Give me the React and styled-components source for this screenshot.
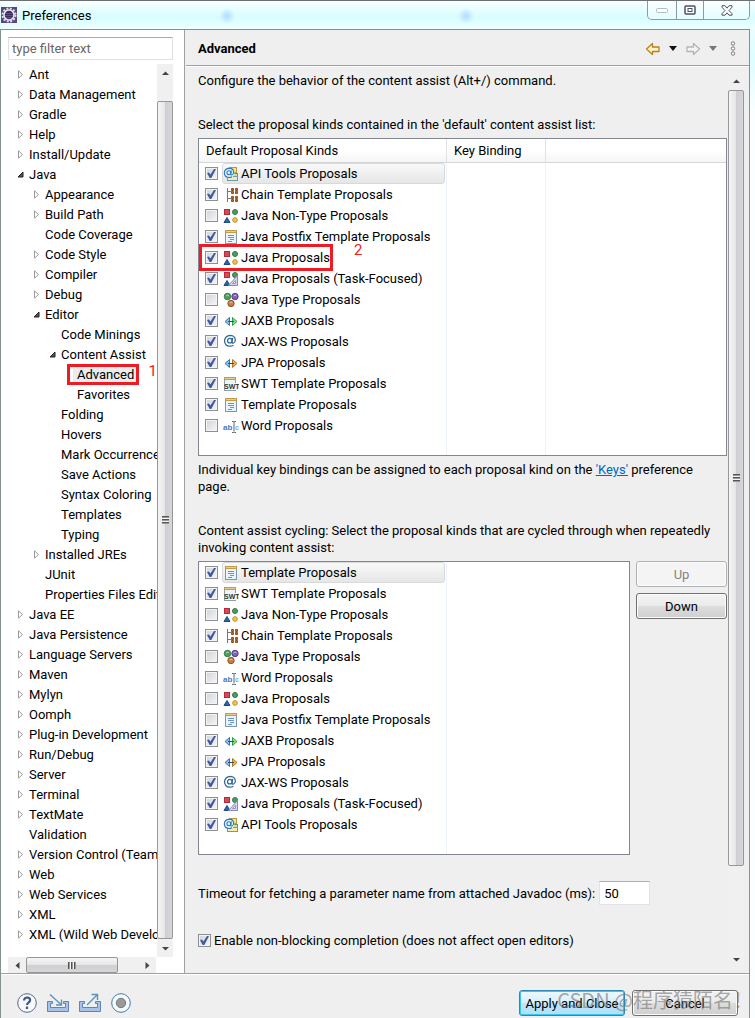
import React, { useState } from 'react'
import styled, { createGlobalStyle } from 'styled-components'

const treeItems = [
    { label: 'Ant', level: 0, node: 'closed' },
    { label: 'Data Management', level: 0, node: 'closed' },
    { label: 'Gradle', level: 0, node: 'closed' },
    { label: 'Help', level: 0, node: 'closed' },
    { label: 'Install/Update', level: 0, node: 'closed' },
    { label: 'Java', level: 0, node: 'open' },
    { label: 'Appearance', level: 1, node: 'closed' },
    { label: 'Build Path', level: 1, node: 'closed' },
    { label: 'Code Coverage', level: 1 },
    { label: 'Code Style', level: 1, node: 'closed' },
    { label: 'Compiler', level: 1, node: 'closed' },
    { label: 'Debug', level: 1, node: 'closed' },
    { label: 'Editor', level: 1, node: 'open' },
    { label: 'Code Minings', level: 2 },
    { label: 'Content Assist', level: 2, node: 'open' },
    { label: 'Advanced', level: 3, selected: true },
    { label: 'Favorites', level: 3 },
    { label: 'Folding', level: 2 },
    { label: 'Hovers', level: 2 },
    { label: 'Mark Occurrences', level: 2 },
    { label: 'Save Actions', level: 2 },
    { label: 'Syntax Coloring', level: 2 },
    { label: 'Templates', level: 2 },
    { label: 'Typing', level: 2 },
    { label: 'Installed JREs', level: 1, node: 'closed' },
    { label: 'JUnit', level: 1 },
    { label: 'Properties Files Editor', level: 1 },
    { label: 'Java EE', level: 0, node: 'closed' },
    { label: 'Java Persistence', level: 0, node: 'closed' },
    { label: 'Language Servers', level: 0, node: 'closed' },
    { label: 'Maven', level: 0, node: 'closed' },
    { label: 'Mylyn', level: 0, node: 'closed' },
    { label: 'Oomph', level: 0, node: 'closed' },
    { label: 'Plug-in Development', level: 0, node: 'closed' },
    { label: 'Run/Debug', level: 0, node: 'closed' },
    { label: 'Server', level: 0, node: 'closed' },
    { label: 'Terminal', level: 0, node: 'closed' },
    { label: 'TextMate', level: 0, node: 'closed' },
    { label: 'Validation', level: 0 },
    { label: 'Version Control (Team)', level: 0, node: 'closed' },
    { label: 'Web', level: 0, node: 'closed' },
    { label: 'Web Services', level: 0, node: 'closed' },
    { label: 'XML', level: 0, node: 'closed' },
    { label: 'XML (Wild Web Developer)', level: 0, node: 'closed' },
]

const defaultKinds = [
    { label: 'API Tools Proposals', icon: 'api', checked: true, selected: true },
    { label: 'Chain Template Proposals', icon: 'chain', checked: true },
    { label: 'Java Non-Type Proposals', icon: 'java' },
    { label: 'Java Postfix Template Proposals', icon: 'template', checked: true },
    { label: 'Java Proposals', icon: 'java', checked: true, mark: '2' },
    { label: 'Java Proposals (Task-Focused)', icon: 'task', checked: true },
    { label: 'Java Type Proposals', icon: 'type' },
    { label: 'JAXB Proposals', icon: 'jaxb', checked: true },
    { label: 'JAX-WS Proposals', icon: 'at', checked: true },
    { label: 'JPA Proposals', icon: 'jpa', checked: true },
    { label: 'SWT Template Proposals', icon: 'swt', checked: true },
    { label: 'Template Proposals', icon: 'template', checked: true },
    { label: 'Word Proposals', icon: 'word' },
]

const cyclingKinds = [
    { label: 'Template Proposals', icon: 'template', checked: true, selected: true },
    { label: 'SWT Template Proposals', icon: 'swt', checked: true },
    { label: 'Java Non-Type Proposals', icon: 'java' },
    { label: 'Chain Template Proposals', icon: 'chain', checked: true },
    { label: 'Java Type Proposals', icon: 'type' },
    { label: 'Word Proposals', icon: 'word' },
    { label: 'Java Proposals', icon: 'java' },
    { label: 'Java Postfix Template Proposals', icon: 'template' },
    { label: 'JAXB Proposals', icon: 'jaxb', checked: true },
    { label: 'JPA Proposals', icon: 'jpa', checked: true },
    { label: 'JAX-WS Proposals', icon: 'at', checked: true },
    { label: 'Java Proposals (Task-Focused)', icon: 'task', checked: true },
    { label: 'API Tools Proposals', icon: 'api', checked: true },
]

const shapes = (
    <>
        <rect x="1.5" y="1.5" width="5" height="5" fill="#d9485a" stroke="#b8293d" />
        <circle cx="12" cy="4" r="2.5" fill="#4f9a62" stroke="#2f7a45" />
        <path d="M4 9.5L7 14.5H1z" fill="#2d62a8" stroke="#1d4a8a" />
        <circle cx="12" cy="12" r="2.3" fill="#f3c552" stroke="#c08a22" />
    </>
)

const atSign = (
    <>
        <circle cx="7.2" cy="7" r="2.4" />
        <path d="M10.2 4.2L9.4 8.4q0 1.5 1.4 1.3Q13 9 13 6.3 12.6 1.6 7.8 1.4 2 1.8 1.6 7.2 2 12.6 7 12.8q2.4 0 4-1" />
    </>
)

const kindIcons = {
    api: (
        <>
            <rect x="6.5" y="1.5" width="7" height="5" fill="#f6e08a" stroke="#b99a3c" />
            <rect x="9.5" y="7.5" width="5" height="4" fill="#bfe3a4" stroke="#5f9c58" />
            <rect x="4.5" y="10.5" width="10" height="4" fill="#f9eaa4" stroke="#6a98bb" />
            <circle cx="6" cy="7" r="5.4" fill="#e3f0fa" />
            <g transform="translate(0 1) scale(.82)" fill="none" stroke="#2e78b6" strokeWidth="1.3">{atSign}</g>
        </>
    ),
    chain: (
        <>
            <path d="M4.5 1v14M4.5 4.5H8M4.5 11.5H8" fill="none" stroke="#777" />
            <path d="M8.5 1.5h2v2h-2zM12.5 1.5h2v2h-2zM8.5 4.5h2v2h-2zM12.5 4.5h2v2h-2zM8.5 9.5h2v2h-2zM12.5 9.5h2v2h-2zM8.5 12.5h2v2h-2zM12.5 12.5h2v2h-2z" fill="#b06a2c" stroke="#93501c" />
        </>
    ),
    java: shapes,
    task: (
        <>
            {shapes}
            <path d="M14.5 4.5v10h-9z" fill="#d9d5ee" stroke="#8c86bb" />
            <path d="M12.5 9.5v3h-3z" fill="#fff" stroke="#9a93c6" />
        </>
    ),
    type: (
        <>
            <circle cx="4.5" cy="4.5" r="3.2" fill="#4e9e5d" stroke="#2c7a40" />
            <circle cx="12" cy="4.5" r="3.2" fill="#7b62b5" stroke="#594092" />
            <circle cx="8" cy="11.5" r="3.2" fill="#c17d43" stroke="#93561f" />
            <path d="M3 4q1.5-2 3 0M10.5 4q1.5-2 3 0M6.5 11q1.5-2 3 0" fill="none" stroke="#fff" opacity=".6" />
        </>
    ),
    template: (
        <>
            <rect x="2.5" y="1.5" width="11" height="13" fill="#e8f3fc" stroke="#7b98ae" />
            <path d="M2 1h12v3H2z" fill="#c39a4c" />
            <path d="M3 2h10v1H3z" fill="#e9cd8c" />
            <path d="M5 6.5h6M5 8.5h6M7 10.5h4M5 12.5h4" stroke="#6c93c4" />
        </>
    ),
    swt: (
        <>
            <rect x="1.5" y="1.5" width="11" height="13" fill="#edf3f8" stroke="#8aa0b0" />
            <path d="M1 1h12v3H1z" fill="#c39a4c" />
            <path d="M2 2h10v1H2z" fill="#e9cd8c" />
            <rect x="2" y="7" width="14" height="7" fill="#f6f6f6" />
            <text x="1" y="13" fontSize="7" fontWeight="700" fontFamily="Liberation Sans, sans-serif" fill="#333">SWT</text>
        </>
    ),
    jaxb: (
        <>
            <path d="M6.5 4.5v8L2 8.5z" fill="#8cc0ea" stroke="#3a76ad" />
            <path d="M9.5 4.5v8l4.5-4z" fill="#7ee08c" stroke="#2fa045" />
            <path d="M5 8.5h6" stroke="#2b4f70" />
        </>
    ),
    jpa: (
        <>
            <path d="M6.5 4.5v8L2 8.5z" fill="#8cc0ea" stroke="#3a76ad" />
            <path d="M9.5 4.5v8l4.5-4z" fill="#eab259" stroke="#b0762a" />
            <path d="M5 8.5h6" stroke="#2b4f70" />
        </>
    ),
    at: <g transform="scale(.95)" fill="none" stroke="#2e6794" strokeWidth="1.3">{atSign}</g>,
    word: (
        <>
            <text x="0" y="12" fontSize="8" fontWeight="700" fontFamily="Liberation Sans, sans-serif" fill="#4a78bd">ab</text>
            <path d="M9 3.5h1.5l.5.5.5-.5H13M11 4v9.5M9 14.5h1.5l.5-.5.5.5H13" fill="none" stroke="#51677c" />
            <text x="12" y="12" fontSize="7" fontWeight="700" fontFamily="Liberation Sans, sans-serif" fill="#6fb0e2">c</text>
        </>
    ),
}

function ScrollBar({ horizontal, before = 0, size = 1, after = 0 }) {
    return (
        <Track $horizontal={horizontal} aria-hidden="true">
            <TrackEnd $horizontal={horizontal}>
                <svg width="7" height="7" viewBox="0 0 7 7">
                    <path d={horizontal ? 'M5.5 0v7L1.5 3.5z' : 'M0 5h7L3.5 1.5z'} fill="#444" />
                </svg>
            </TrackEnd>
            <TrackSpace $grow={before} />
            <Thumb $horizontal={horizontal} $grow={size}>
                <Grip $horizontal={horizontal} />
            </Thumb>
            <TrackSpace $grow={after} />
            <TrackEnd $horizontal={horizontal}>
                <svg width="7" height="7" viewBox="0 0 7 7">
                    <path d={horizontal ? 'M1.5 0v7l4-3.5z' : 'M0 2h7L3.5 5.5z'} fill="#444" />
                </svg>
            </TrackEnd>
        </Track>
    )
}

function Tree() {
    return (
        <TreeList>
            {treeItems.map((item) => (
                <TreeRow key={item.label} $level={item.level}>
                    <Twisty viewBox="0 0 9 9" aria-hidden="true">
                        {item.node === 'closed' && <path d="M2.5 .8v7.4L6.5 4.5z" fill="#fff" stroke="#9a9a9a" />}
                        {item.node === 'open' && <path d="M7 2v5H2z" fill="#555" stroke="#222" />}
                    </Twisty>
                    <TreeLabel $selected={item.selected}>{item.label}</TreeLabel>
                    {item.selected && <TreeMark />}
                    {item.selected && <TreeMarkNumber>1</TreeMarkNumber>}
                </TreeRow>
            ))}
        </TreeList>
    )
}

function KindRow({ item, name, keyColumn }) {
    const id = `${name}-${item.label}`.replace(/[^A-Za-z]+/g, '-')

    return (
        <tr>
            <td>
                <KindCell>
                    <CheckBox type="checkbox" id={id} defaultChecked={item.checked} />
                    <KindLabel htmlFor={id} $selected={item.selected}>
                        <KindIcon viewBox="0 0 16 16" aria-hidden="true">{kindIcons[item.icon]}</KindIcon>
                        {item.label}
                    </KindLabel>
                    {item.mark && <KindMark />}
                    {item.mark && <KindMarkNumber>{item.mark}</KindMarkNumber>}
                </KindCell>
            </td>
            {keyColumn && <td />}
            <td />
        </tr>
    )
}

function App() {
    const [filter, setFilter] = useState('')
    const [timeout, setTimeoutValue] = useState('50')

    return (
        <Window>
            <GlobalStyle />
            <TitleBar>
                <TitleIcon viewBox="0 0 16 16" aria-hidden="true">
                    <rect width="16" height="16" fill="#5a4685" />
                    <circle cx="8" cy="8" r="6.5" fill="none" stroke="#ddd" strokeWidth="2" strokeDasharray="2 1.4" />
                    <circle cx="8" cy="8" r="5" fill="#3b2c66" stroke="#eee" strokeWidth="1.5" />
                    <path d="M4 6.5h8M4 8.5h8M5 10.5h6" stroke="#5f4f92" />
                </TitleIcon>
                <Title>Preferences</Title>
                <WindowButtons>
                    <WindowButton $width={28} aria-label="Minimize">
                        <svg width="12" height="5"><rect x=".5" y=".5" width="11" height="4" rx="1" fill="#fff" stroke="#b5bcc0" /></svg>
                    </WindowButton>
                    <WindowButton $width={27} aria-label="Maximize">
                        <svg width="12" height="10"><rect x="1" y="1" width="10" height="8" rx="1" fill="#fff" stroke="#4c5265" strokeWidth="1.5" /><rect x="4" y="3.5" width="4" height="3" fill="#fff" stroke="#4c5265" /></svg>
                    </WindowButton>
                    <WindowButton $width={46} aria-label="Close">
                        <svg width="12" height="11" viewBox="0 0 12 11"><path d="M1 .7h3l2 2.5 2-2.5h3v1.5L8 5.5l3 3.2v1.5H8L6 7.8l-2 2.4H1V8.7l3-3.2-3-3.3z" fill="#fff" stroke="#4c5265" /></svg>
                    </WindowButton>
                </WindowButtons>
            </TitleBar>
            <Frame>
                <Body>
                    <SideBar>
                        <FilterInput
                            aria-label="type filter text"
                            placeholder="type filter text"
                            value={filter}
                            onChange={(e) => setFilter(e.target.value)}
                        />
                        <TreeArea>
                            <Tree />
                            <ScrollBar before={19} size={836} />
                        </TreeArea>
                        <HorizontalHolder>
                            <ScrollBar horizontal size={92} after={20} />
                        </HorizontalHolder>
                    </SideBar>
                    <Page>
                        <PageHeader>
                            <h1>Advanced</h1>
                            <PageTools>
                                <ToolButton aria-label="Back">
                                    <svg width="16" height="14" viewBox="0 0 16 14"><path d="M1.5 7l6-5.5V5H14v4.5H7.5v3z" fill="#fff3c4" stroke="#b9801c" strokeWidth="1.3" strokeLinejoin="round" /></svg>
                                </ToolButton>
                                <ToolButton aria-label="Back history">
                                    <svg width="8" height="5"><path d="M0 0h8L4 5z" fill="#111" /></svg>
                                </ToolButton>
                                <ToolButton aria-label="Forward" disabled>
                                    <svg width="16" height="14" viewBox="0 0 16 14"><path d="M14.5 7l-6-5.5V5H2v4.5h6.5v3z" fill="#f4f4f4" stroke="#b4b4b4" strokeWidth="1.3" strokeLinejoin="round" /></svg>
                                </ToolButton>
                                <ToolButton aria-label="Forward history" disabled>
                                    <svg width="8" height="5"><path d="M0 0h8L4 5z" fill="#777" /></svg>
                                </ToolButton>
                                <ToolButton aria-label="View menu">
                                    <svg width="6" height="15" fill="#fff" stroke="#777"><circle cx="3" cy="2.5" r="1.7" /><circle cx="3" cy="7.5" r="1.7" /><circle cx="3" cy="12.5" r="1.7" /></svg>
                                </ToolButton>
                            </PageTools>
                        </PageHeader>
                        <PageBody>
                            <Content>
                                <Paragraph $space={27}>Configure the behavior of the content assist (Alt+/) command.</Paragraph>
                                <Paragraph $space={5}>Select the proposal kinds contained in the 'default' content assist list:</Paragraph>
                                <TableBox>
                                    <KindTable>
                                        <colgroup>
                                            <KindCol />
                                            <KeyCol />
                                            <col />
                                        </colgroup>
                                        <thead>
                                            <tr>
                                                <th>Default Proposal Kinds</th>
                                                <th>Key Binding</th>
                                                <th />
                                            </tr>
                                        </thead>
                                        <tbody>
                                            {defaultKinds.map((item) => (
                                                <KindRow key={item.label} item={item} name="default" keyColumn />
                                            ))}
                                            <FillRow><td /><td /><td /></FillRow>
                                        </tbody>
                                    </KindTable>
                                </TableBox>
                                <KeysText>
                                    Individual key bindings can be assigned to each proposal kind on the <a href="#keys">'Keys'</a> preference page.
                                </KeysText>
                                <Paragraph $space={5}>
                                    Content assist cycling: Select the proposal kinds that are cycled through when repeatedly invoking content assist:
                                </Paragraph>
                                <Cycling>
                                    <TableBox>
                                        <KindTable>
                                            <colgroup>
                                                <KindCol />
                                                <col />
                                            </colgroup>
                                            <tbody>
                                                {cyclingKinds.map((item) => (
                                                    <KindRow key={item.label} item={item} name="cycling" />
                                                ))}
                                                <FillRow><td /><td /></FillRow>
                                            </tbody>
                                        </KindTable>
                                    </TableBox>
                                    <ButtonColumn>
                                        <Button disabled>Up</Button>
                                        <Button>Down</Button>
                                    </ButtonColumn>
                                </Cycling>
                                <TimeoutRow>
                                    <label htmlFor="timeout">Timeout for fetching a parameter name from attached Javadoc (ms):</label>
                                    <TimeoutInput id="timeout" value={timeout} onChange={(e) => setTimeoutValue(e.target.value)} />
                                </TimeoutRow>
                                <CompletionRow>
                                    <CheckBox type="checkbox" id="completion" defaultChecked />
                                    <label htmlFor="completion">Enable non-blocking completion (does not affect open editors)</label>
                                </CompletionRow>
                            </Content>
                            <ScrollBar size={775} after={84} />
                        </PageBody>
                    </Page>
                </Body>
                <Footer>
                    <FooterTools>
                        <ToolButton aria-label="Help">
                            <svg width="20" height="20" viewBox="0 0 20 20"><circle cx="10" cy="10" r="9.3" fill="#f7f9fc" stroke="#54698c" /><path d="M7 7.5q.3-3 3.2-3 2.9.2 2.9 2.6 0 1.5-1.6 2.5-1.4 1-1.4 2.4M10 13.5V16" fill="none" stroke="#41587f" strokeWidth="2.2" /></svg>
                        </ToolButton>
                        <ToolButton aria-label="Import preferences">
                            <svg width="22" height="20" viewBox="0 0 22 20"><path d="M.5 8.5h5v2h-2v4h15v-4h-2v-2h5v10H.5z" fill="#a9c2e4" stroke="#5f84bb" /><path d="M3 1.5l11 10M14.5 6.5V12H9" fill="none" stroke="#5a93bd" strokeWidth="1.4" /></svg>
                        </ToolButton>
                        <ToolButton aria-label="Export preferences">
                            <svg width="22" height="20" viewBox="0 0 22 20"><path d="M.5 8.5h5v2h-2v4h15v-4h-2v-2h5v10H.5z" fill="#a9c2e4" stroke="#5f84bb" /><path d="M8 12l10-10M12.5 1.5h6V7" fill="none" stroke="#5a93bd" strokeWidth="1.4" /></svg>
                        </ToolButton>
                        <ToolButton aria-label="Record preferences">
                            <svg width="20" height="20" viewBox="0 0 20 20"><circle cx="10" cy="10" r="9.3" fill="#f7fbfe" stroke="#3f79a8" /><circle cx="10" cy="10" r="4.7" fill="#999" stroke="#777" /></svg>
                        </ToolButton>
                    </FooterTools>
                    <FooterButtons>
                        <Button $primary>Apply and Close</Button>
                        <Button>Cancel</Button>
                    </FooterButtons>
                    <Watermark>CSDN @程序猿陌名！</Watermark>
                </Footer>
            </Frame>
        </Window>
    )
}

const GlobalStyle = createGlobalStyle`
    * {
        box-sizing: border-box;
    }
    body {
        margin: 0;
        font-family: Roboto, "Noto Sans CJK SC", sans-serif;
        font-size: 13px;
        line-height: 17px;
        color: #000;
    }
    button, input {
        font: inherit;
        color: inherit;
    }
    svg {
        display: block;
        flex: none;
    }
`

const Window = styled.div`
    display: flex;
    flex-direction: column;
    min-height: 100vh;
    background: linear-gradient(#f2ffff, #dcfdff 60px, #fafefe 110px);
`

const TitleBar = styled.header`
    display: flex;
    align-items: center;
    height: 29px;
    padding: 0 5px 0 1px;
    border-top: 1px solid #6c7072;
    background:
        radial-gradient(circle at 227px 15px, #b4dcff 0, transparent 8px),
        radial-gradient(circle at 466px 15px, #b4dcff 0, transparent 8px),
        linear-gradient(rgba(255, 255, 255, .5), rgba(200, 253, 255, .6) 16px, rgba(240, 255, 255, .8));
`

const TitleIcon = styled.svg`
    width: 16px;
    height: 16px;
`

const Title = styled.div`
    flex: 1;
    padding-left: 5px;
`

const WindowButtons = styled.div`
    display: flex;
    align-self: flex-start;
    border: 1px solid #8d9b9f;
    border-top: 0;
    border-radius: 0 0 5px 5px;
    overflow: hidden;
`

const WindowButton = styled.button`
    display: flex;
    align-items: center;
    justify-content: center;
    width: ${props => props.$width}px;
    height: 18px;
    padding: 0;
    border: 0;
    background: rgba(255, 255, 255, .4);

    & + & {
        border-left: 1px solid #8d9b9f;
    }
`

const Frame = styled.div`
    flex: 1;
    display: flex;
    flex-direction: column;
    margin-right: 5px;
    border: 1px solid #839090;
    border-bottom: 0;
    background: #efefef;
`

const Body = styled.div`
    flex: 1;
    display: flex;
    border-bottom: 1px solid #a0a0a0;
`

const SideBar = styled.nav`
    flex: none;
    display: flex;
    flex-direction: column;
    width: 184px;
    padding: 7px 11px 0 7px;
    border-right: 1px solid #a0a0a0;
    background: #fff;
`

const FilterInput = styled.input`
    width: 100%;
    height: 23px;
    padding: 0 3px;
    border: 1px solid #dde1e8;
    border-top-color: #a9abb2;
    outline: 0;

    &::placeholder {
        color: #666;
    }
`

const TreeArea = styled.div`
    flex: 1;
    display: flex;
    margin-top: 4px;
`

const TreeList = styled.ul`
    flex: 1;
    min-width: 0;
    margin: 0;
    padding: 0 0 12px;
    overflow: hidden;
    list-style: none;
`

const TreeRow = styled.li`
    position: relative;
    display: flex;
    align-items: center;
    height: 20px;
    padding-left: ${props => 8 + props.$level * 16}px;
    white-space: nowrap;
`

const Twisty = styled.svg`
    width: 9px;
    height: 9px;
`

const TreeLabel = styled.span`
    margin-left: ${props => props.$selected ? 0 : 4}px;
    padding: 1px 4px 1px ${props => props.$selected ? 4 : 0}px;
    background: ${props => props.$selected ? '#ececec' : 'none'};
`

const TreeMark = styled.span`
    position: absolute;
    left: 59px;
    top: 0;
    width: 72px;
    height: 21px;
    border: 3px solid #ed1c24;
`

const TreeMarkNumber = styled.span`
    position: absolute;
    right: 0;
    top: -1px;
    font-size: 15px;
    color: #ed1c24;
`

const Track = styled.div`
    flex: none;
    align-self: stretch;
    display: flex;
    flex-direction: ${props => props.$horizontal ? 'row' : 'column'};
    width: ${props => props.$horizontal ? 'auto' : '16px'};
    height: ${props => props.$horizontal ? '16px' : 'auto'};
    background: #f0f0f0;
`

const TrackEnd = styled.div`
    flex: none;
    display: flex;
    align-items: center;
    justify-content: center;
    width: ${props => props.$horizontal ? 18 : 16}px;
    height: ${props => props.$horizontal ? 16 : 18}px;
`

const TrackSpace = styled.div`
    flex: ${props => props.$grow} 0 0;
`

const Thumb = styled.div`
    flex: ${props => props.$grow} 0 0;
    display: flex;
    align-items: center;
    justify-content: center;
    border: 1px solid #979797;
    border-radius: 2px;
    background: linear-gradient(${props => props.$horizontal ? '180deg' : '90deg'}, #f5f5f5, #e6e6e8 48%, #cfcfd3 52%, #d6d6d9);
`

const Grip = styled.div`
    width: ${props => props.$horizontal ? 8 : 7}px;
    height: ${props => props.$horizontal ? 7 : 8}px;
    background: repeating-linear-gradient(${props => props.$horizontal ? '90deg' : '180deg'}, #555 0, #555 1px, #999 1px, #999 2px, #f4f4f4 2px, #f4f4f4 3px);
`

const HorizontalHolder = styled.div`
    padding-right: 17px;
`

const Page = styled.main`
    flex: 1;
    min-width: 0;
    display: flex;
    flex-direction: column;
    margin-left: 1px;
`

const PageHeader = styled.div`
    display: flex;
    align-items: center;
    justify-content: space-between;
    height: 36px;
    padding: 2px 13px 0 12px;
    border-bottom: 1px solid #a0a0a0;
    box-shadow: 0 1px 0 #fff;

    h1 {
        margin: 0;
        font-size: 13px;
        font-weight: 700;
    }
`

const PageTools = styled.div`
    display: flex;
    align-items: center;
    gap: 8px;
`

const ToolButton = styled.button`
    display: flex;
    padding: 0;
    border: 0;
    background: none;

    &:last-child {
        margin-left: 5px;
    }
`

const PageBody = styled.div`
    flex: 1;
    display: flex;
    padding: 6px 5px 5px 12px;
`

const Content = styled.div`
    flex: 1;
    min-width: 0;
    padding-right: 1px;
`

const Paragraph = styled.p`
    margin: 0 0 ${props => props.$space}px;
`

const KeysText = styled.p`
    margin: 5px 0 27px;

    a {
        color: #0066cc;
    }
`

const TableBox = styled.div`
    flex: 1;
    border: 1px solid #828790;
    background: #fff;
`

const KindTable = styled.table`
    width: 100%;
    table-layout: fixed;
    border-collapse: separate;
    border-spacing: 0;

    th {
        height: 24px;
        padding: 0 7px;
        border-right: 1px solid #dfe1e5;
        border-bottom: 1px solid #d5d5d5;
        background: linear-gradient(#fff, #fff 50%, #f4f5f6);
        font-weight: 400;
        text-align: left;
    }
    td {
        height: 21px;
        padding: 0;
        border-right: 1px solid #edf3fb;
    }
    th:last-child, td:last-child {
        border-right: 0;
    }
`

const KindCol = styled.col`
    width: 248px;
`

const KeyCol = styled.col`
    width: 99px;
`

const FillRow = styled.tr`
    && td {
        height: 19px;
    }
`

const KindCell = styled.div`
    position: relative;
    display: flex;
    align-items: center;
    height: 21px;
    padding: 0 1px 0 6px;
`

const KindLabel = styled.label`
    flex: 1;
    display: flex;
    align-items: center;
    gap: 2px;
    height: 21px;
    margin-left: 4px;
    border: 1px solid ${props => props.$selected ? '#d9d9d9' : 'transparent'};
    border-radius: 3px;
    background: ${props => props.$selected ? 'linear-gradient(#f9f9f9, #e6e6e6)' : 'none'};
    white-space: nowrap;
`

const KindIcon = styled.svg`
    width: 16px;
    height: 16px;
`

const KindMark = styled.span`
    position: absolute;
    left: 0;
    top: -3px;
    width: 134px;
    height: 27px;
    border: 3px solid #ed1c24;
`

const KindMarkNumber = styled.span`
    position: absolute;
    left: 155px;
    top: -5px;
    font-size: 15px;
    color: #ed1c24;
`

const CheckBox = styled.input`
    appearance: none;
    flex: none;
    display: grid;
    place-items: center;
    width: 13px;
    height: 13px;
    margin: 0;
    border: 1px solid #8e8f8f;
    background: linear-gradient(135deg, #cfd3d9, #f6f6f6);
    box-shadow: inset 0 0 0 1px #f4f4f4;

    &:checked::after {
        content: '';
        width: 9px;
        height: 9px;
        background: #3f5a9e;
        clip-path: polygon(0 45%, 22% 38%, 38% 62%, 78% 0, 100% 0, 48% 100%, 30% 100%);
    }
`

const Cycling = styled.div`
    display: flex;
    gap: 6px;
`

const ButtonColumn = styled.div`
    display: flex;
    flex-direction: column;
    gap: 6px;
    width: 91px;
`

const Button = styled.button`
    height: 26px;
    padding: 0;
    border: 1px solid ${props => props.$primary ? '#2c88b5' : '#707070'};
    border-radius: 3px;
    background: ${props => props.$primary ? 'linear-gradient(#eff8fd, #d9f0fc 48%, #bee6fd 52%, #b0dff8)' : 'linear-gradient(#f3f3f3, #ebebeb 48%, #dddddd 52%, #cfcfcf)'};
    box-shadow: inset 0 0 0 1px ${props => props.$primary ? '#33c7f2' : '#fcfcfc'};
    white-space: nowrap;

    &:disabled {
        border-color: #adb2b5;
        background: #f4f4f4;
        color: #838383;
    }
`

const TimeoutRow = styled.div`
    display: flex;
    align-items: center;
    gap: 4px;
    margin-top: 26px;
`

const TimeoutInput = styled.input`
    width: 51px;
    height: 24px;
    padding: 0 4px;
    border: 1px solid #e2e3ea;
    border-top-color: #abadb3;
    background: #fff;
    outline: 0;
`

const CompletionRow = styled.div`
    display: flex;
    align-items: center;
    gap: 3px;
    margin-top: 27px;
`

const Footer = styled.footer`
    position: relative;
    display: flex;
    align-items: center;
    justify-content: space-between;
    height: 44px;
    padding: 14px 11px 0 16px;
    box-shadow: inset 0 1px 0 #fff;
`

const FooterTools = styled.div`
    display: flex;
    align-items: center;
    gap: 10px;

    ${ToolButton} {
        margin: 0;
    }
`

const FooterButtons = styled.div`
    display: grid;
    grid-template-columns: 106px 106px;
    gap: 7px;
`

const Watermark = styled.div`
    position: absolute;
    right: -4px;
    bottom: 6px;
    font-family: "Noto Sans CJK SC", sans-serif;
    font-size: 20px;
    line-height: 24px;
    color: rgba(120, 120, 120, .65);
    white-space: nowrap;
    pointer-events: none;
`

export default App
